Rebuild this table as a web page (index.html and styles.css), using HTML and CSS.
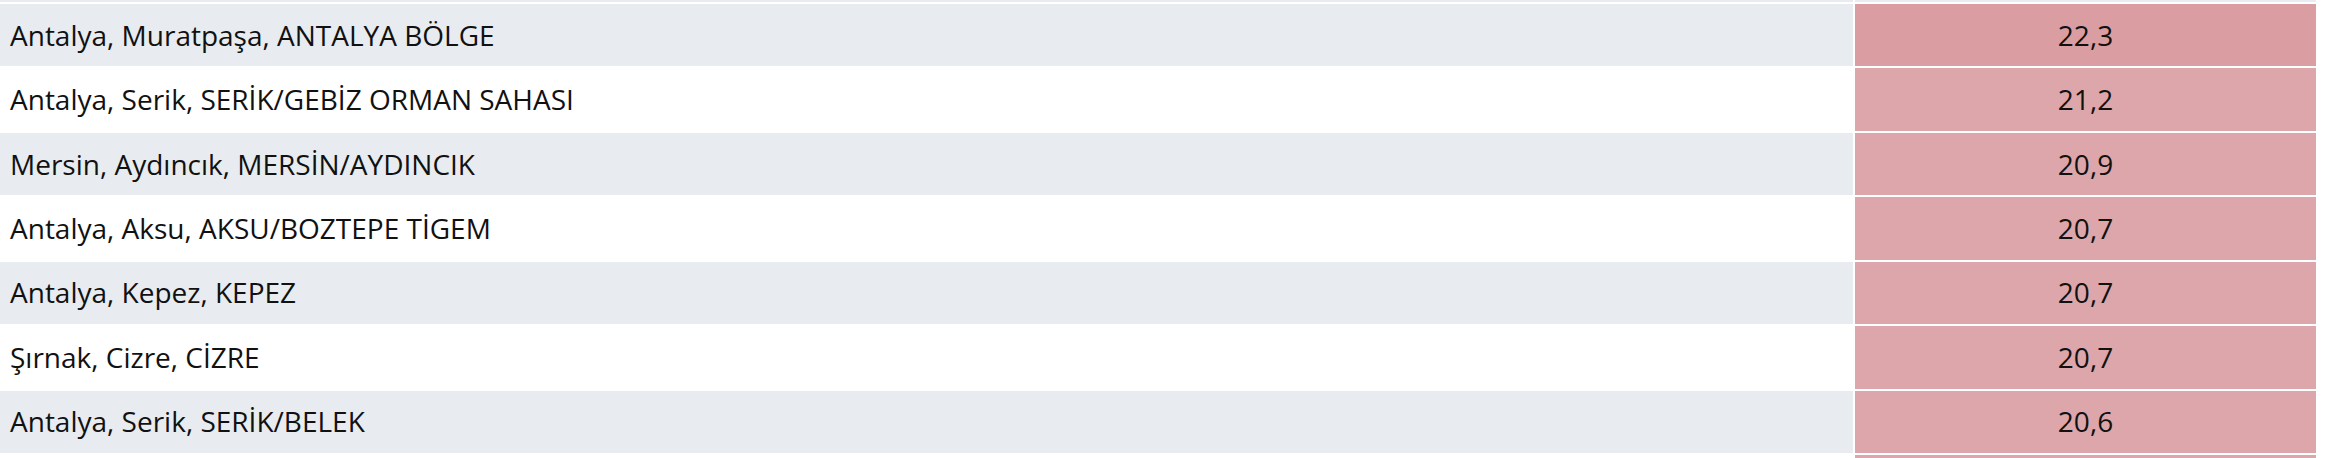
FILE: index.html
```html
<!DOCTYPE html>
<html lang="tr">
<head>
  <meta charset="UTF-8" />
  <meta name="viewport" content="width=device-width, initial-scale=1.0"/>
  <title>Sıcaklık Sıralaması</title>
  <link rel="stylesheet" href="styles.css">
</head>
<body>
  <div class="wrap">
    <table class="rank">
      <thead>
        <tr>
          <th class="name"></th>
          <th class="value"></th>
        </tr>
      </thead>
      <tbody>
        <tr>
          <td class="name">Antalya, Muratpaşa, ANTALYA BÖLGE</td>
          <td class="value top">22,3</td>
        </tr>
        <tr>
          <td class="name">Antalya, Serik, SERİK/GEBİZ ORMAN SAHASI</td>
          <td class="value">21,2</td>
        </tr>
        <tr>
          <td class="name">Mersin, Aydıncık, MERSİN/AYDINCIK</td>
          <td class="value">20,9</td>
        </tr>
        <tr>
          <td class="name">Antalya, Aksu, AKSU/BOZTEPE TİGEM</td>
          <td class="value">20,7</td>
        </tr>
        <tr>
          <td class="name">Antalya, Kepez, KEPEZ</td>
          <td class="value">20,7</td>
        </tr>
        <tr>
          <td class="name">Şırnak, Cizre, CİZRE</td>
          <td class="value">20,7</td>
        </tr>
        <tr>
          <td class="name">Antalya, Serik, SERİK/BELEK</td>
          <td class="value">20,6</td>
        </tr>
        <tr>
          <td class="name"></td>
          <td class="value"></td>
        </tr>
      </tbody>
    </table>
  </div>
</body>
</html>
```

FILE: styles.css
```css
* {
  box-sizing: border-box;
}
html, body {
  margin: 0;
  padding: 0;
  background: #fff;
  overflow: hidden;
}
body {
  font-family: 'Open Sans', 'Noto Sans', sans-serif;
  color: #111;
}
.wrap {
  padding-right: 8px;
}
.rank {
  width: calc(100% + 2px);
  margin-left: -2px;
  margin-top: -40px;
  border-collapse: separate;
  border-spacing: 2px;
  font-size: 28px;
}
.rank th {
  height: 40px;
  background-color: #e8ecf0;
  font-weight: normal;
}
.rank td {
  height: 62.45px;
  padding: 0 10px;
  vertical-align: middle;
  line-height: 1.4;
}
.rank .name {
  text-align: left;
}
.rank .value {
  width: 461px;
  text-align: center;
}
.rank tbody tr:nth-child(odd) .name {
  background-color: #e8ecf0;
}
.rank tbody td.value {
  background-color: #dda6aa;
}
.rank tbody td.value.top {
  background-color: #da9ea2;
}
```
